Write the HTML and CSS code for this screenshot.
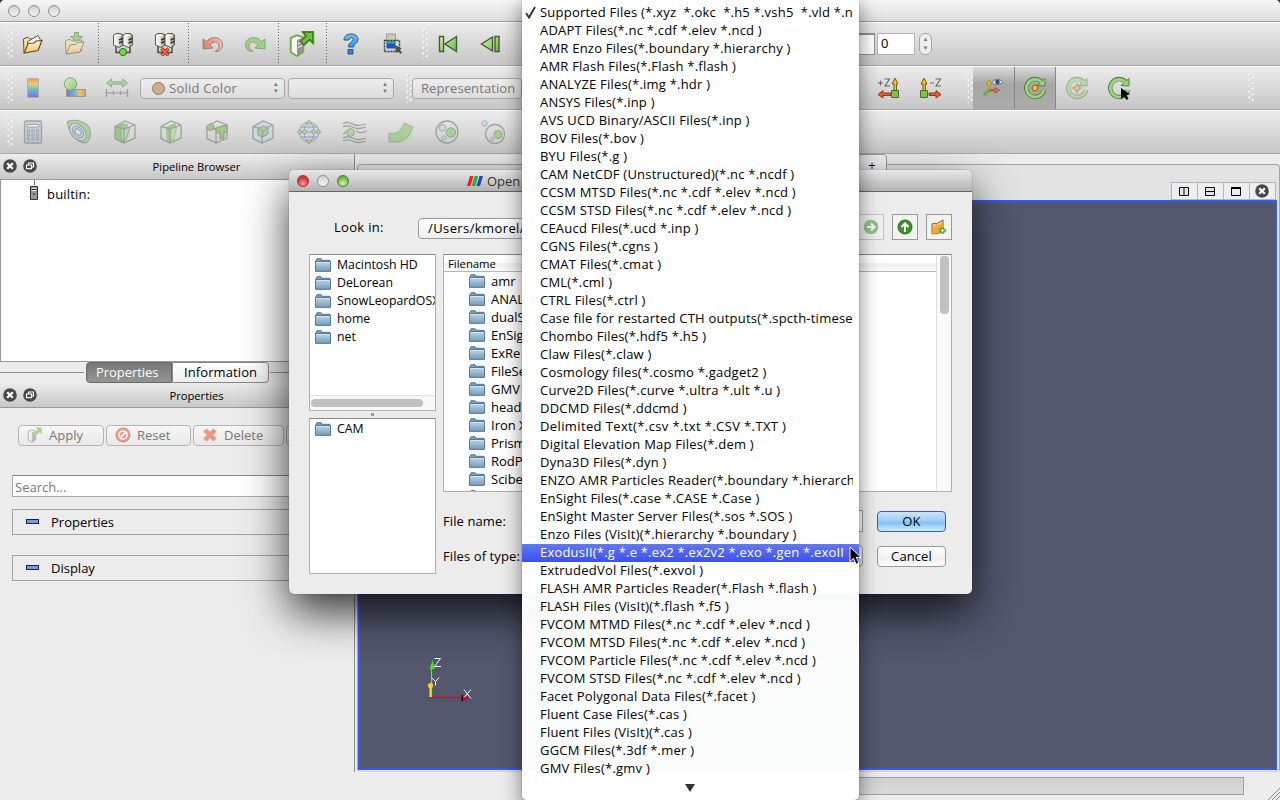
FILE: index.html
```html
<!DOCTYPE html>
<html lang="en">
<head>
<meta charset="utf-8">
<title>ParaView</title>
<link rel="stylesheet" href="styles.css">
</head>
<body>
<svg class="defs" width="0" height="0" aria-hidden="true">
  <defs>
    <linearGradient id="gGreen" x1="0" y1="0" x2="1" y2="1"><stop offset="0" stop-color="#d8f5c0"/><stop offset="1" stop-color="#59c42c"/></linearGradient>
    <linearGradient id="gRed" x1="0" y1="0" x2="1" y2="0"><stop offset="0" stop-color="#f0431c"/><stop offset="1" stop-color="#f6b9a6"/></linearGradient>
    <linearGradient id="gYellow" x1="0" y1="0" x2="0" y2="1"><stop offset="0" stop-color="#fff3cf"/><stop offset="1" stop-color="#f9c75f"/></linearGradient>
    <linearGradient id="gBlue" x1="0" y1="0" x2="0" y2="1"><stop offset="0" stop-color="#6cc0ff"/><stop offset="1" stop-color="#1b7fe6"/></linearGradient>
    <linearGradient id="gSteel" x1="0" y1="0" x2="1" y2="0"><stop offset="0" stop-color="#fff"/><stop offset=".5" stop-color="#e4e4de"/><stop offset="1" stop-color="#8f8f86"/></linearGradient>
    <linearGradient id="gRain" x1="0" y1="0" x2="0" y2="1"><stop offset="0" stop-color="#f4642a"/><stop offset=".3" stop-color="#f6c020"/><stop offset=".6" stop-color="#15a6e0"/><stop offset="1" stop-color="#5a2cb8"/></linearGradient>
    <linearGradient id="gRainH" x1="0" y1="0" x2="1" y2="0"><stop offset="0" stop-color="#5a2cb8"/><stop offset=".4" stop-color="#15a6e0"/><stop offset=".7" stop-color="#f6c020"/><stop offset="1" stop-color="#f4642a"/></linearGradient>
    <linearGradient id="gFolder" x1="0" y1="0" x2="0" y2="1"><stop offset="0" stop-color="#bdd5e6"/><stop offset="1" stop-color="#739dbd"/></linearGradient>
    <symbol id="folder" viewBox="0 0 16 14"><path d="M1 13V2.500L2 .7h4l1 1.600h8V13z" fill="#7f9fb8" stroke="#587590"/><path d="M.5 3.500h15v9.800H.5z" fill="url(#gFolder)" stroke="#587a96"/><path d="M1 4.500h14" stroke="#d6e5f0"/></symbol>
    <symbol id="server" viewBox="0 0 22 24"><path d="M4 14v6.500h14V14" fill="none" stroke="#4b4b3e" stroke-width="1.500"/><g stroke="#5b5b4c"><path d="M1.500 3L4 1.500h4.500L11 3v10l-4 2.500L1.500 13z" fill="url(#gSteel)"/><path d="M11 3l2.500-1.500H18L20.500 3v10l-4 2.500L11 13z" fill="url(#gSteel)"/></g><path d="M7 8l3.500-1.500M7 11l3.500-1.500M16.500 8L20 6.500M16.500 11L20 9.500" fill="none" stroke="#33332a" stroke-width="1.400"/><path d="M3 3.500h6M12.500 3.500h6" stroke="#fff"/></symbol>
    <symbol id="dockclose" viewBox="0 0 14 14"><circle cx="7" cy="7" r="6.800" fill="#484848"/><path d="M4.200 4.200l5.600 5.600M9.800 4.200L4.200 9.800" stroke="#fff" stroke-width="2.300"/></symbol>
    <symbol id="dockfloat" viewBox="0 0 14 14"><circle cx="7" cy="7" r="6.800" fill="#484848"/><path d="M5.500 5.500V4h5v4H9M3.500 6h5v3.700h-5z" fill="none" stroke="#fff" stroke-width="1.200"/></symbol>
    <symbol id="rot" viewBox="0 0 24 24"><path d="M18.500 5.500A9 9 0 1 0 21 14" fill="none" stroke="#5c7a4c" stroke-width="4.400"/><path d="M14 9.500l8 .500V2.500z" fill="#97d673" stroke="#5c7a4c"/><path d="M18.500 6A8.800 8.800 0 1 0 20.800 14" fill="none" stroke="#9ad97a" stroke-width="2.600"/></symbol>
    <symbol id="cube" viewBox="0 0 24 24"><path d="M2 6.500L12 1l10 4v13L11 23 2 18.500zM2 6.500L11 9l11-4M11 9v14" fill="none" stroke="#67675a" stroke-width="1.300"/></symbol>
    <symbol id="arrow" viewBox="0 0 14 20"><path d="M1 1v14.500l3.500-3.200 2.600 6 2.800-1.200-2.600-5.800H12z" fill="#000" stroke="#fff"/></symbol>
  </defs>
</svg>

<main class="window">
  <header class="titlebar"><i class="light"></i><i class="light"></i><i class="light"></i></header>

  <div class="toolbar">
    <i class="grip"></i>
    <span class="tool"><svg width="22" height="22" viewBox="0 0 22 22"><path d="M2 20L1.500 6l4-2 2 2 3 0V18z" fill="#fbe3a4" stroke="#5a5030"/><path d="M5 9l11-6.500L19 8 8 13z" fill="#fff" stroke="#5a5a50"/><path d="M2.200 20L6 10.500l6-.500 2-2 6-.500-4 10z" fill="url(#gYellow)" stroke="#5a5030" stroke-width="1.200"/></svg></span>
    <span class="tool off"><svg width="22" height="24" viewBox="0 0 22 24"><path d="M2 22L1.500 9l4-2 2 2 10-1V19z" fill="#fbe3a4" stroke="#5a5030"/><path d="M2.200 22L6 13l6-.500 2-2 6-.500-4 10z" fill="url(#gYellow)" stroke="#5a5030"/><path d="M10.500.5h4v4h4L12.500 10l-6-5.500h4z" fill="#65c63c" stroke="#3f6a30"/></svg></span>
    <i class="rule"></i>
    <span class="tool"><svg width="22" height="24"><use href="#server"/><circle cx="11" cy="20" r="3.600" fill="#6bdc3c" stroke="#356a20"/></svg></span>
    <span class="tool"><svg width="22" height="24"><use href="#server"/><path d="M7.500 16.500l7 7m0-7l-7 7" stroke="#73301e" stroke-width="3.400"/><path d="M7.500 16.500l7 7m0-7l-7 7" stroke="#f9603c" stroke-width="2"/></svg></span>
    <i class="rule"></i>
    <span class="tool off strong"><svg width="22" height="18" viewBox="0 0 22 18"><path d="M1 4v10l10-1-3-3c3-4 8-4 9 0 .5 3-1 5-4 6.500C18 17 21 13 20.500 9 19.500 2 10 0 4.500 6.500z" fill="url(#gRed)" stroke="#7a4434"/></svg></span>
    <span class="tool off"><svg width="22" height="18" viewBox="0 0 22 18"><path d="M21 4v10l-10-1 3-3c-3-4-8-4-9 0-.5 3 1 5 4 6.500C4 17 1 13 1.500 9 2.500 2 12 0 17.500 6.500z" fill="#65c63c" stroke="#3f6a30"/></svg></span>
    <i class="rule tight"></i>
    <span class="tool"><svg width="26" height="26" viewBox="0 0 26 26"><path d="M2 7l6-2.500 6 2V21l-6 4-6-4zM14 1h10v11l-3.500-3.500L15 14l-3.500-3.500L17 5z" fill="#fff" stroke="#8ede4c" stroke-width="3"/><path d="M2 7l6-2.500 6 2V21l-6 4-6-4z" fill="#f6f6f2" stroke="#6a675a"/><path d="M8 9l6-2.500V21l-6 4z" fill="#98948a"/><path d="M9 13l4-2M9 16.500l4-2" stroke="#fff"/><path d="M14 1h10v11l-3.500-3.500L15 14l-3.500-3.500L17 5z" fill="#6fbf45" stroke="#3d6228" stroke-width="1.300"/></svg></span>
    <i class="rule wide"></i>
    <span class="tool"><svg width="18" height="22" viewBox="0 0 18 22"><path d="M2 7C2 3 5 1 9 1s7 2 7 5.500c0 4-4.500 4.500-4.500 7.500H6.500c0-5 4.500-5 4.500-7.500 0-2.500-4-2.500-4 .5zM6 16.500h5v4.500H6z" fill="url(#gBlue)" stroke="#32566e"/></svg></span>
    <span class="tool"><svg width="20" height="22" viewBox="0 0 20 22"><path d="M3.500 1h9v7h-9z" fill="#d4c6b4" stroke="#a09a90"/><path d="M3.500 8h9v7.500h-9z" fill="#1d50c0"/><path d="M3.500 8h9v2.500h-9z" fill="#21b68c"/><path d="M1.500 7.500h15v11h-15z" fill="none" stroke="#333" stroke-dasharray="2 1" stroke-width="1.400"/><path d="M12 12l1 8 2-2 2.500 3 1.500-1.500-2.500-3 2.500-1z" fill="#55523c"/></svg></span>
    <i class="grip late"></i>
    <span class="tool first-play"><svg width="20" height="18" viewBox="0 0 20 18"><path d="M1.500 1.500h4v15h-4zM18.500 1.500v15L7 9z" fill="url(#gGreen)" stroke="#4c5540" stroke-width="1.400"/></svg></span>
    <span class="tool"><svg width="20" height="18" viewBox="0 0 20 18"><path d="M15 1.500h4v15h-4zM12.500 2v14L1.500 9z" fill="url(#gGreen)" stroke="#4c5540" stroke-width="1.400"/></svg></span>
    <div class="timebox"><span class="field blank"></span><span class="field num">0</span><span class="spinner"><b>▲</b><b>▼</b></span></div>
  </div>

  <div class="toolbar">
    <i class="grip"></i>
    <span class="tool off strong"><svg width="12" height="20"><path d="M.5.500h11v19H.5z" fill="url(#gRain)" stroke="#999"/></svg></span>
    <span class="tool off strong"><svg width="24" height="22" viewBox="0 0 24 22"><path d="M3.500 12.500h19v7h-19z" fill="url(#gRainH)" stroke="#77735a"/><circle cx="7.500" cy="7" r="6.200" fill="url(#gGreen)" stroke="#5a7a4a"/></svg></span>
    <span class="tool off"><svg width="24" height="20" viewBox="0 0 24 20"><path d="M1.500 5L6.500.8v3h11v-3L22.500 5l-5 4.200v-3h-11v3z" fill="#7cd055" stroke="#50803c"/><path d="M1.500 11v8M22.500 11v8M1.500 15h21M8.500 13v4M15.500 13v4" stroke="#666" fill="none" stroke-width="1.200"/></svg></span>
    <span class="combo solid"><i class="swatch"></i>Solid Color<em><b>▲</b><b>▼</b></em></span>
    <span class="combo empty"><em><b>▲</b><b>▼</b></em></span>
    <i class="grip third"></i>
    <span class="combo repr">Representation</span>
    <div class="viewtools">
      <span class="tool"><svg width="24" height="24" viewBox="0 0 24 24"><path d="M1 7h5M3.500 4.500v5M7.500 3h5l-4.500 7h5" fill="none" stroke="#666" stroke-width="1.100"/><path d="M17 15V8h-2l3-6 3 6h-1.500v7z" fill="#f9bd28" stroke="#6b5c2c"/><path d="M14 17H6v-2.500l-5 4L6 22v-2.500h8z" fill="#f4552c" stroke="#8a3a24"/><path d="M14.500 14.500h7v7h-7z" fill="#7cc43f" stroke="#4c6a34"/></svg></span>
      <span class="tool"><svg width="24" height="24" viewBox="0 0 24 24"><path d="M11 7h4M16.500 3h5L17 10h5" fill="none" stroke="#666" stroke-width="1.100"/><path d="M4 15V8H2l3-6 3 6H6.500v7z" fill="#f9bd28" stroke="#6b5c2c"/><path d="M10 17h7v-2.500l5 4-5 3.500v-2.500h-7z" fill="#f4552c" stroke="#8a3a24"/><path d="M1.500 14.500h7v7h-7z" fill="#7cc43f" stroke="#4c6a34"/></svg></span>
      <i class="grip camgrip"></i>
      <span class="tool down"><svg width="24" height="22" viewBox="0 0 24 22"><path d="M6 13V7H4.500L7 3l2.500 4H8v6z" fill="#f9bd28" stroke="#9b8040" stroke-width=".8"/><path d="M8 12.500h5v-2l4.500 2.700-4.500 2.800v-2H8z" fill="#f4653c" stroke="#9a4a34" stroke-width=".7"/><path d="M7.500 13.500L4 16" stroke="#5fae38" stroke-width="2.500"/><path d="M1.500 19v-5l4 4z" fill="#5fae38"/><path d="M10 5.500C13 1.500 17.500 1.500 20.500 5c-3 3.500-7 3.500-10.500.5z" fill="#e6edf2" stroke="#55626e" stroke-width=".8"/><circle cx="15.500" cy="5" r="2.300" fill="#2f4b6c"/></svg></span>
      <span class="tool down two"><svg width="24" height="24"><use href="#rot"/><circle cx="12" cy="12" r="3" fill="#f9b91f" stroke="#8a6a20"/></svg></span>
      <span class="tool off"><svg width="24" height="24"><use href="#rot"/><path d="M12 6.500v11M6.500 12h11" stroke="#555"/><circle cx="12" cy="12" r="2.800" fill="#f9b91f" stroke="#8a6a20"/></svg></span>
      <span class="tool"><svg width="24" height="24"><use href="#rot"/><path d="M14 12v11l3-2.500 2.500 3.500 2-1.500-2.200-3.500 3.700-.7z" fill="#000"/></svg></span>
      <i class="grip endgrip"></i>
    </div>
  </div>

  <div class="toolbar filters">
    <i class="grip"></i>
    <span class="tool off"><svg width="20" height="24" viewBox="0 0 20 24"><rect x="1.500" y="1" width="17" height="22" rx="1.500" fill="#a9c4da" stroke="#5e6a70" stroke-width="1.300"/><path d="M4 4.500h12v2.500H4z" fill="#fff" stroke="#666"/><path d="M4 11h12M4 15h12M4 19h12" stroke="#666" stroke-width="3" stroke-dasharray="3 1.500"/><path d="M5 11h11M5 15h11M5 19h11" stroke="#fff" stroke-width="1.200" stroke-dasharray="1.200 3.300"/></svg></span>
    <span class="tool off"><svg width="26" height="26" viewBox="0 0 26 26"><path d="M1.500 2.500C9-1 24 3 24.500 13c.3 7-3 11-6 11C9 23 2 13 1.500 2.500z" fill="#7cc85a" stroke="#4f6a48"/><g transform="rotate(48 12 13)" fill="none" stroke="#4f6680"><ellipse cx="12" cy="13" rx="10" ry="6.500" fill="#d7e5cf"/><ellipse cx="12" cy="13" rx="7" ry="4.500" fill="#9fc4e6"/><ellipse cx="12" cy="13" rx="3.600" ry="2.300" fill="#dfe9f2"/></g></svg></span>
    <span class="tool off"><svg width="24" height="24"><path d="M2 7l6-4 7 1-3 18-3 1-7-4z" fill="#63b346"/><path d="M8 9l9-1.500-4 12-5 2z" fill="#9fd98a" stroke="#4a7a38"/><use href="#cube"/></svg></span>
    <span class="tool off"><svg width="24" height="24"><path d="M7 7l9-4 2 5-3 12-7 1z" fill="#63b346"/><path d="M11 9l6-1.500-2 11-5 2z" fill="#9fd98a"/><use href="#cube"/></svg></span>
    <span class="tool off"><svg width="24" height="24"><use href="#cube"/><path d="M2 5.500l4-2 3 2v4l-4 1-3-1.500zM11 8l5-2 6-1v7l-3 1v5l-4 1v-6h-4z" fill="#63b346" stroke="#4a6a40"/></svg></span>
    <span class="tool off"><svg width="24" height="24"><path d="M2 6.500L12 1l10 4v13L11 23 2 18.500z" fill="#b9d6ea"/><use href="#cube"/><path d="M7 9l5-3 5 2v6l-5 3-5-2z" fill="#7cc85a" stroke="#4a6a40"/><path d="M7 9l5 2 5-3M12 11v6" fill="none" stroke="#4a6a40"/></svg></span>
    <span class="tool off"><svg width="24" height="24" viewBox="0 0 24 24"><g fill="none" stroke="#5f6b70"><circle cx="12" cy="12" r="9.800" fill="#bcd4e6"/><ellipse cx="12" cy="12" rx="4.800" ry="9.800"/><path d="M2 12h20M4 7h16M4 17h16"/></g><g fill="#a8dd8c" stroke="#4c7038"><circle cx="12" cy="2.500" r="1.800"/><circle cx="12" cy="21.500" r="1.800"/><circle cx="2.500" cy="12" r="1.800"/><circle cx="21.500" cy="12" r="1.800"/><circle cx="7.500" cy="11.500" r="1.800"/><circle cx="16.500" cy="11.500" r="1.800"/></g></svg></span>
    <span class="tool off"><svg width="26" height="24" viewBox="0 0 26 24"><path d="M1 4c5-4 8 0 12 1s8 0 11-1M1 7c5-3 9 0 12 1s8 0 11-1M1 14c2 0 2-2 3-3M14 11c3 2 7 2 11 0M1 18c5-3 9 0 12 1s8 0 11-1M1 21c5-3 9 0 12 1s8 0 11-1" fill="none" stroke="#666b5c" stroke-width="1.300"/><circle cx="8.500" cy="12.500" r="3.800" fill="#8ad169" stroke="#5a6a50"/></svg></span>
    <span class="tool off"><svg width="26" height="22" viewBox="0 0 26 22"><path d="M1 12h24v9H1z" fill="#b9dba9"/><path d="M1 12c8 2 13-3 15-10l9 4C22 14 18 20 10 21H1z" fill="#7cc85a" stroke="#68805c"/></svg></span>
    <span class="tool off"><svg width="24" height="24" viewBox="0 0 24 24"><circle cx="12" cy="12" r="11" fill="none" stroke="#5f6b60" stroke-width="1.300"/><circle cx="7.500" cy="8" r="3.200" fill="#b8d8ee" stroke="#5c7a90"/><circle cx="16" cy="12.500" r="4.700" fill="#79c857" stroke="#4f7a40"/><circle cx="9" cy="18" r="2.200" fill="#b8d8ee" stroke="#5c7a90"/></svg></span>
    <span class="tool off"><svg width="24" height="24" viewBox="0 0 24 24"><circle cx="14" cy="14" r="9.500" fill="none" stroke="#5f6b60" stroke-width="1.300"/><circle cx="3.500" cy="3.500" r="2.800" fill="#b8d8ee" stroke="#5c7a90"/><circle cx="17" cy="14.500" r="4" fill="#79c857" stroke="#4f7a40"/><circle cx="11" cy="19" r="1.800" fill="#b8d8ee" stroke="#5c7a90"/></svg></span>
  </div>

  <div class="body">
    <aside class="dock">
      <div class="dockhead"><svg width="14" height="14"><use href="#dockclose"/></svg><svg width="14" height="14"><use href="#dockfloat"/></svg><span>Pipeline Browser</span></div>
      <div class="tree"><svg width="8" height="22" viewBox="0 0 8 22"><path d="M4.500 0v5" stroke="#777"/><path d="M.5 6.500h7v13h-7z" fill="#999" stroke="#333"/><path d="M2 8h4v3H2z" fill="#fff"/><path d="M2 9.500h4M4 13v2" stroke="#111"/></svg><span>builtin:</span></div>
      <div class="tabs"><span class="tab on">Properties</span><span class="tab">Information</span></div>
      <div class="dockhead second"><svg width="14" height="14"><use href="#dockclose"/></svg><svg width="14" height="14"><use href="#dockfloat"/></svg><span>Properties</span></div>
      <div class="actions">
        <span class="btn ap"><svg width="16" height="16" viewBox="0 0 26 26"><path d="M2 7l6-2.500 6 2V21l-6 4-6-4z" fill="#eee" stroke="#4d4a3c"/><path d="M8 9l6-2.500V21l-6 4z" fill="#98948a"/><path d="M14 1h10v11l-3.500-3.500L15 14l-3.500-3.500L17 5z" fill="#6fbf45"/></svg>Apply</span>
        <span class="btn re"><svg width="16" height="16" viewBox="0 0 16 16"><circle cx="8" cy="8" r="7" fill="#f0512c" stroke="#c23a1c"/><circle cx="8" cy="8" r="4" fill="none" stroke="#fff" stroke-width="1.700"/><path d="M5.200 10.800l5.600-5.600" stroke="#fff" stroke-width="1.700"/></svg>Reset</span>
        <span class="btn de"><svg width="16" height="16" viewBox="0 0 16 16"><path d="M3 3l10 10M13 3L3 13" stroke="#ee4a28" stroke-width="4.500"/></svg>Delete</span>
        <span class="btn he"></span>
      </div>
      <div class="search">Search...</div>
      <div class="group"><i></i>Properties</div>
      <div class="group g2"><i></i>Display</div>
    </aside>
    <section class="pane">
      <div class="layouttabs"><span>+</span></div>
      <div class="frame">
        <div class="viewbar">
          <span><svg width="10" height="9"><path d="M.5.500h9v8h-9zM5 0v9" fill="#dfe2f2" stroke="#000"/></svg></span>
          <span><svg width="10" height="9"><path d="M.5.500h9v8h-9zM0 4.500h10" fill="#dfe2f2" stroke="#000"/></svg></span>
          <span><svg width="10" height="9"><path d="M.5 1h9v7.500h-9z" fill="#eee" stroke="#000"/><path d="M0 1h10" stroke="#000" stroke-width="2"/></svg></span>
          <span><svg width="14" height="14"><use href="#dockclose"/></svg></span>
        </div>
        <div class="render">
          <svg class="axes" width="50" height="50" viewBox="0 0 50 50"><path d="M6.500 42V9" stroke="#58ea20" stroke-width="1.200"/><path d="M4.500 14l3-9 2.500 9z" fill="#4fdf1c"/><path d="M5.500 42V31" stroke="#f6e810" stroke-width="2"/><circle cx="5.500" cy="30.500" r="2.600" fill="#f4d41c"/><path d="M6 42.500h32" stroke="#d8001c"/><path d="M37 40l8 3-8 3z" fill="#d8001c"/><path d="M36.500 40h1.500v6h-1.500z" fill="#200"/><g fill="none" stroke="#fff" stroke-width="1"><path d="M9.500 3.500h6l-6 8h6.500M6.500 22.500l4 4v4M14 22.500l-3.500 4M39 34.500l7 9M46 34.500l-7 8"/></g></svg>
        </div>
      </div>
    </section>
  </div>
  <footer class="status"><span class="progress"></span><svg width="12" height="12"><path d="M0 12L12 0M4 12l8-8M8 12l4-4" stroke="#888"/></svg></footer>
</main>

<section class="dialog">
  <header class="dlgbar"><i class="light red"></i><i class="light"></i><i class="light green"></i><svg width="16" height="12" viewBox="0 0 16 12"><path d="M0 11L3 1h3.500l-3 10z" fill="#ee1f2c"/><path d="M4.700 11l3-10h3.500l-3 10z" fill="#24b52c"/><path d="M9.500 11l3-10H16l-3 10z" fill="#2a3be0"/></svg><span>Open File:</span></header>
  <div class="lookrow">
    <span class="looklabel">Look in:</span><span class="lookcombo">/Users/kmorel/</span>
    <span class="sq faint"><svg width="16" height="16" viewBox="0 0 16 16"><circle cx="8" cy="8" r="7.300" fill="#3c9426"/><path d="M4 8h7M8 4.500L11.500 8 8 11.500" fill="none" stroke="#fff" stroke-width="2"/></svg></span>
    <span class="sq"><svg width="16" height="16" viewBox="0 0 16 16"><circle cx="8" cy="8" r="7" fill="#3c9426" stroke="#246a18"/><path d="M8 13V5M4.500 8L8 4.500 11.500 8" fill="none" stroke="#fff" stroke-width="2"/></svg></span>
    <span class="sq"><svg width="16" height="16" viewBox="0 0 16 16"><path d="M1 15V5l3-1 1 1 7-4v10l-3 3z" fill="#f4c877" stroke="#8a6426"/><path d="M1 15L3 7.500l9-3L11 13z" fill="#f2a92f"/><path d="M11.500 8l3.500 3.500-3.500 3.500L8 11.500z" fill="#4fae34" stroke="#3a7f28" stroke-width=".7"/><path d="M11.500 9.500v4M9.500 11.500h4" stroke="#d8f5c8"/></svg></span>
  </div>
  <div class="panes">
    <div class="leftcol">
      <div class="list places">
        <div class="row"><svg width="16" height="14"><use href="#folder"/></svg><span>Macintosh HD</span></div>
        <div class="row"><svg width="16" height="14"><use href="#folder"/></svg><span>DeLorean</span></div>
        <div class="row"><svg width="16" height="14"><use href="#folder"/></svg><span>SnowLeopardOSX</span></div>
        <div class="row"><svg width="16" height="14"><use href="#folder"/></svg><span>home</span></div>
        <div class="row"><svg width="16" height="14"><use href="#folder"/></svg><span>net</span></div>
        <div class="hscroll"><i></i></div>
      </div>
      <div class="split"></div>
      <div class="list recent"><div class="row"><svg width="16" height="14"><use href="#folder"/></svg><span>CAM</span></div></div>
    </div>
    <div class="rightcol">
      <div class="list files">
        <div class="filecol">
          <div class="colhead">Filename</div>
          <div class="row"><svg width="16" height="14"><use href="#folder"/></svg><span>amr</span></div>
          <div class="row"><svg width="16" height="14"><use href="#folder"/></svg><span>ANAL</span></div>
          <div class="row"><svg width="16" height="14"><use href="#folder"/></svg><span>dualS</span></div>
          <div class="row"><svg width="16" height="14"><use href="#folder"/></svg><span>EnSig</span></div>
          <div class="row"><svg width="16" height="14"><use href="#folder"/></svg><span>ExRe</span></div>
          <div class="row"><svg width="16" height="14"><use href="#folder"/></svg><span>FileSe</span></div>
          <div class="row"><svg width="16" height="14"><use href="#folder"/></svg><span>GMV</span></div>
          <div class="row"><svg width="16" height="14"><use href="#folder"/></svg><span>head</span></div>
          <div class="row"><svg width="16" height="14"><use href="#folder"/></svg><span>Iron X</span></div>
          <div class="row"><svg width="16" height="14"><use href="#folder"/></svg><span>Prism</span></div>
          <div class="row"><svg width="16" height="14"><use href="#folder"/></svg><span>RodP</span></div>
          <div class="row"><svg width="16" height="14"><use href="#folder"/></svg><span>Scibe</span></div>
          <div class="row"><svg width="16" height="14"><use href="#folder"/></svg></div>
        </div>
        <div class="vscroll"><i></i></div>
      </div>
      <div class="formrow"><label>File name:</label><span class="infield"></span><span class="push ok">OK</span></div>
      <div class="formrow"><label>Files of type:</label><span class="infield drop"></span><span class="push">Cancel</span></div>
    </div>
  </div>
</section>

<nav class="menu">
  <svg class="check" width="11" height="13" viewBox="0 0 11 13"><path d="M1 7l3 4.500L10 1" fill="none" stroke="#333" stroke-width="1.900"/></svg>
  <ul>
    <li>Supported Files (*.xyz&nbsp; *.okc&nbsp; *.h5 *.vsh5&nbsp; *.vld *.nc</li>
    <li>ADAPT Files(*.nc *.cdf *.elev *.ncd )</li>
    <li>AMR Enzo Files(*.boundary *.hierarchy )</li>
    <li>AMR Flash Files(*.Flash *.flash )</li>
    <li>ANALYZE Files(*.img *.hdr )</li>
    <li>ANSYS Files(*.inp )</li>
    <li>AVS UCD Binary/ASCII Files(*.inp )</li>
    <li>BOV Files(*.bov )</li>
    <li>BYU Files(*.g )</li>
    <li>CAM NetCDF (Unstructured)(*.nc *.ncdf )</li>
    <li>CCSM MTSD Files(*.nc *.cdf *.elev *.ncd )</li>
    <li>CCSM STSD Files(*.nc *.cdf *.elev *.ncd )</li>
    <li>CEAucd Files(*.ucd *.inp )</li>
    <li>CGNS Files(*.cgns )</li>
    <li>CMAT Files(*.cmat )</li>
    <li>CML(*.cml )</li>
    <li>CTRL Files(*.ctrl )</li>
    <li>Case file for restarted CTH outputs(*.spcth-timese</li>
    <li>Chombo Files(*.hdf5 *.h5 )</li>
    <li>Claw Files(*.claw )</li>
    <li>Cosmology files(*.cosmo *.gadget2 )</li>
    <li>Curve2D Files(*.curve *.ultra *.ult *.u )</li>
    <li>DDCMD Files(*.ddcmd )</li>
    <li class="loose">Delimited Text(*.csv *.txt *.CSV *.TXT )</li>
    <li>Digital Elevation Map Files(*.dem )</li>
    <li>Dyna3D Files(*.dyn )</li>
    <li>ENZO AMR Particles Reader(*.boundary *.hierarchy</li>
    <li>EnSight Files(*.case *.CASE *.Case )</li>
    <li>EnSight Master Server Files(*.sos *.SOS )</li>
    <li>Enzo Files (VisIt)(*.hierarchy *.boundary )</li>
    <li class="sel">ExodusII(*.g *.e *.ex2 *.ex2v2 *.exo *.gen *.exoII</li>
    <li>ExtrudedVol Files(*.exvol )</li>
    <li>FLASH AMR Particles Reader(*.Flash *.flash )</li>
    <li>FLASH Files (VisIt)(*.flash *.f5 )</li>
    <li>FVCOM MTMD Files(*.nc *.cdf *.elev *.ncd )</li>
    <li>FVCOM MTSD Files(*.nc *.cdf *.elev *.ncd )</li>
    <li>FVCOM Particle Files(*.nc *.cdf *.elev *.ncd )</li>
    <li>FVCOM STSD Files(*.nc *.cdf *.elev *.ncd )</li>
    <li>Facet Polygonal Data Files(*.facet )</li>
    <li>Fluent Case Files(*.cas )</li>
    <li>Fluent Files (VisIt)(*.cas )</li>
    <li>GGCM Files(*.3df *.mer )</li>
    <li>GMV Files(*.gmv )</li>
  </ul>
  <div class="more"><svg width="10" height="8"><path d="M0 0h10L5 8z" fill="#333"/></svg></div>
</nav>
<svg class="pointer" width="14" height="20"><use href="#arrow"/></svg>
</body>
</html>
```
FILE: styles.css
```css
* { box-sizing: border-box; }
html, body { margin: 0; width: 1280px; height: 800px; overflow: hidden; }
body { position: relative; background: #2c3c70; font: 13px/18px "Open Sans", "Noto Sans", sans-serif; color: #000; }
svg { display: block; flex: none; }
i, em, b { font-style: normal; font-weight: normal; display: block; }
.defs { position: absolute; }

.window { width: 1280px; height: 800px; display: flex; flex-direction: column; background: #ececec; border-radius: 5px 5px 0 0; overflow: hidden; isolation: isolate; }
.titlebar { height: 22px; flex: none; display: flex; align-items: center; gap: 8px; padding-left: 8px; background: linear-gradient(#f6f6f6, #dedede); border-bottom: 1px solid #9c9c9c; }
.light { width: 12px; height: 12px; border-radius: 50%; border: 1px solid #8e8e8e; background: linear-gradient(#d2d2d2, #f4f4f4); }
.light.red { background: radial-gradient(circle at 50% 75%, #ff9d95, #dc3238 60%, #b0353a); border-color: #8b3a3a; }
.light.green { background: radial-gradient(circle at 50% 75%, #d5f5a5, #78bd4c 60%, #4f8a38); border-color: #4b7a38; }

.toolbar { height: 44px; flex: none; display: flex; align-items: center; padding-left: 7px; background: linear-gradient(#ececec, #c6c6c6); border-top: 1px solid #fbfbfb; border-bottom: 1px solid #a9a9a9; }
.grip { width: 6px; height: 30px; flex: none; background: radial-gradient(circle at 1.500px 1.500px, #f4f4f4 1px, transparent 1.400px) 0 0 / 6px 5.800px, radial-gradient(circle at 4.500px 4px, #f2f2f2 1px, transparent 1.400px) 0 0 / 6px 5.800px, radial-gradient(circle at 2.200px 2.200px, #bbb 1px, transparent 1.400px) 0 0 / 6px 5.800px; margin-right: -1px; }
.tool { width: 42px; height: 42px; flex: none; display: flex; align-items: center; justify-content: center; }
.off svg { opacity: .5; }
.strong svg { opacity: .6; }
.rule { flex: none; width: 6px; height: 42px; background: repeating-linear-gradient(#666 0 1px, transparent 1px 3px) 2px 0 / 1px 100% no-repeat; }
.rule.tight { width: 5px; }
.rule.wide { width: 7px; background-position: 3px 0; }
.grip.late { margin-left: 8px; }
.timebox { margin-left: 338px; display: flex; align-items: center; width: 83px; }
.field { height: 22px; background: #fff; border: 1px solid #aaa; border-width: 2px 1px 1px; }
.field.blank { width: 26px; border-color: #8f8f8f; margin-right: 2px; }
.field.num { width: 38px; padding-left: 3px; line-height: 19px; border: 1px solid #b5b5b5; }
.spinner { margin-left: 4px; width: 13px; height: 22px; border: 1px solid #a5a5a5; border-radius: 6px; background: #eee; color: #777; font-size: 6px; line-height: 9px; text-align: center; padding-top: 1px; }

.combo { height: 21px; flex: none; display: flex; align-items: center; border: 1px solid #a8a8a8; border-radius: 4px; background: linear-gradient(#eee, #dcdcdc); color: #777; }
.combo.solid { width: 145px; margin-left: 2px; padding-left: 11px; letter-spacing: .25px; }
.swatch { width: 13px; height: 13px; margin-right: 4px; border-radius: 50%; background: #d4ac88; border: 1px solid #8a7c70; }
.combo em { margin-left: auto; padding-right: 5px; font-size: 6px; line-height: 7px; color: #777; }
.combo.empty { width: 106px; margin-left: 3px; }
.grip.third { margin-left: 12px; }
.combo.repr { width: 110px; margin-left: 1px; padding-left: 8px; overflow: hidden; letter-spacing: .1px; }
.viewtools { display: flex; align-items: center; margin-left: 346px; }
.camgrip { margin-left: 15px; margin-right: 0; }
.down { background: linear-gradient(#dcdcdc, #a6a6a6 40%, #ababab); border-right: 1px solid #858585; }
.down.two { width: 41px; }
.endgrip { margin-left: 108px; }
.filters { padding-left: 7px; }
.filters .tool { width: 46px; }
.filters .grip { margin-right: -3px; }

.body { height: 618px; flex: none; display: flex; gap: 2px; }
.dock { width: 355px; border-right: 1px solid #8d8d8d; display: flex; flex-direction: column; }
.dockhead { height: 26px; flex: none; display: flex; align-items: center; gap: 6px; padding: 0 0 2px 3px; border-bottom: 1px solid #999; background: linear-gradient(#ececec, #c8c8c8); font-size: 11.200px; }
.dockhead span { flex: 1; text-align: center; margin-right: 4px; padding-top: 2px; }
.dockhead.second { height: 25px; margin-top: -1px; padding-bottom: 0; }
.dockhead.second span { margin-right: 4px; }
.tree { height: 182px; flex: none; display: flex; gap: 9px; padding-left: 29px; background: #fff; border: 1px solid #999; border-width: 0 0 1px 1px; }
.tree span { padding-top: 5px; letter-spacing: .2px; }
.tabs { height: 22px; flex: none; display: flex; padding-left: 86px; background: linear-gradient(#8f8f8f, #8f8f8f) 0 10px / 84px 1px no-repeat, linear-gradient(#8f8f8f, #8f8f8f) 270px 10px / 84px 1px no-repeat; }
.tab { height: 21px; border: 1px solid #888; border-radius: 0 4px 4px 0; padding: 0 9px 0 11px; width: 97px; line-height: 19px; background: linear-gradient(#fff, #eee); letter-spacing: .1px; }
.tab.on { width: 86px; padding: 0 8px 0 9px; color: #fff; font-weight: 500; letter-spacing: -.05px; background: linear-gradient(#777, #959595); border-radius: 4px 0 0 4px; border-color: #666; }
.actions { display: flex; gap: 2px; margin: 17px 0 0 18px; overflow: hidden; }
.btn { height: 21px; flex: none; display: flex; align-items: center; border: 1px solid #b4b4b4; border-radius: 4px; padding: 0 0 1px 8px; gap: 6px; color: #777; background: linear-gradient(#f6f6f6, #e9e9e9); }
.btn svg { opacity: .55; }
.ap { width: 86px; } .re { width: 85px; } .de { width: 91px; } .he { width: 60px; }
.search { margin: 29px 0 0 12px; height: 22px; flex: none; background: #fff; border: 1px solid #aaa; border-top: 1px solid #888; padding-left: 2px; line-height: 22px; color: #777; }
.group { margin: 12px 0 0 12px; height: 26px; flex: none; display: flex; align-items: center; padding-left: 13px; border: 1px solid #a2a2a2; }
.group.g2 { margin-top: 20px; }
.group i { width: 13px; height: 5px; background: #7a98dc; border: 1px solid #13205e; margin-right: 12px; position: relative; top: -1px; }

.pane { flex: 1; display: flex; flex-direction: column; position: relative; }
.layouttabs { height: 10px; display: flex; justify-content: flex-end; padding-right: 393px; position: relative; z-index: 1; }
.layouttabs span { width: 30px; height: 20px; border: 1px solid #999; border-radius: 4px; text-align: center; line-height: 20px; background: #f2f2f2; }
.frame { flex: 1; border: 1px solid #a5a5a5; border-radius: 4px; border-bottom-color: #d2d2d2; background: #e3e3e3; display: flex; flex-direction: column; padding: 17px 2px 1px 0; }
.viewbar { display: flex; justify-content: flex-end; height: 18px; padding-right: 1px; }
.viewbar span { width: 27px; margin-left: -1px; height: 18px; padding-right: 2px; border: 1px solid #b5b5b5; background: #efefef; display: flex; align-items: center; justify-content: center; }
.render { flex: 1; border: 2px solid #3656ff; background: #52576e; position: relative; }
.axes { position: absolute; left: 65px; top: 453px; }
.status { flex: 1; display: flex; align-items: center; justify-content: flex-end; }
.progress { width: 400px; height: 18px; border: 1px solid #a0a0a0; background: linear-gradient(#d0d0d0, #dadada); margin-right: 24px; }
.status svg { align-self: flex-end; }

.dialog { position: absolute; left: 289px; top: 170px; width: 683px; height: 424px; background: #ececec; border-radius: 5px; box-shadow: 0 0 1px rgba(0,0,0,.7), 0 18px 44px rgba(0,0,0,.78); overflow: hidden; display: flex; flex-direction: column; }
.dlgbar { height: 22px; flex: none; display: flex; align-items: center; gap: 8px; padding-left: 8px; background: linear-gradient(#e8e8e8, #b2b2b2); border-bottom: 1px solid #666; color: #333; }
.dlgbar svg { margin-left: 110px; }
.dlgbar span { margin-left: -4px; }
.lookrow { display: flex; align-items: center; height: 26px; margin: 22px 0 14px; padding-left: 45px; }
.looklabel { width: 84px; letter-spacing: .3px; }
.lookcombo { width: 440px; height: 21px; margin-top: 2px; border: 1px solid #999; border-radius: 4px; background: linear-gradient(#fff, #eee); padding-left: 9px; line-height: 19px; letter-spacing: .4px; }
.sq { width: 26px; height: 26px; border: 1px solid #999; display: flex; align-items: center; justify-content: center; background: #f3f3f3; margin-right: 8px; }
.sq.faint { opacity: .5; }
.panes { display: flex; gap: 7px; padding-left: 20px; }
.leftcol { width: 127px; font-size: 12.300px; }
.list { background: #fff; border: 1px solid #b0b0b0; border-top-color: #888; overflow: hidden; }
.row { height: 18px; display: flex; align-items: center; gap: 6px; padding-left: 5px; white-space: nowrap; }
.places { height: 157px; padding-top: 1px; position: relative; }
.hscroll { position: absolute; left: 0; right: 0; bottom: 0; height: 15px; border-top: 1px solid #e2e2e2; background: #f8f8f8; padding: 3px 0 0 1px; }
.hscroll i { width: 112px; height: 8px; border-radius: 4px; background: #c1c1c1; }
.split { height: 7px; background: radial-gradient(circle, #999 1.500px, transparent 2px); }
.recent { height: 156px; padding-top: 1px; }
.rightcol { width: 509px; }
.files { height: 238px; display: flex; }
.filecol { flex: 1; }
.filecol .row { padding-left: 25px; }
.colhead { height: 17px; padding-left: 4px; font-size: 11.300px; line-height: 18px; background: linear-gradient(#fff 50%, #efefef 50%, #fafafa); border-bottom: 1px solid #b5b5b5; }
.vscroll { width: 15px; border-left: 1px solid #ddd; background: #fafafa; padding: 1px 0 0 3px; }
.vscroll i { width: 9px; height: 58px; border-radius: 4px; background: #c1c1c1; }
.formrow { display: flex; align-items: center; height: 22px; margin-top: 18px; letter-spacing: .1px; }
.formrow + .formrow { margin-top: 13px; }
.formrow label { width: 90px; }
.infield { width: 330px; height: 22px; border: 1px solid #a0a0a0; background: #fff; margin-right: 14px; }
.infield.drop { border-radius: 4px; background: linear-gradient(#fff, #ddd); }
.push { width: 69px; height: 21px; border: 1px solid #999; border-radius: 4px; text-align: center; line-height: 19px; background: linear-gradient(#fff, #f0f0f0 60%, #fff); }
.push.ok { border-color: #5154a0; background: linear-gradient(#cfe4fa, #9bcbf7 50%, #7fbcf5 52%, #c4f0ff); }

.menu { position: absolute; left: 521.500px; top: -4px; width: 337.500px; height: 804px; background: rgba(255,255,255,.98); border-radius: 5px; box-shadow: 0 0 1px rgba(0,0,0,.6), 0 8px 20px rgba(0,0,0,.5); }
.menu ul { list-style: none; margin: 0; padding: 8px 0 0; }
.menu li { height: 18px; line-height: 16px; letter-spacing: .22px; padding-left: 18.500px; border-right: 6px solid transparent; overflow: hidden; white-space: nowrap; }
.menu .loose { letter-spacing: .38px; }
.menu .sel { color: #fff; font-weight: 500; letter-spacing: .2px; background: linear-gradient(#6378f0, #3b50ee) border-box; }
.check { position: absolute; left: 3px; top: 10px; }
.more { display: flex; justify-content: center; padding-top: 6px; }
.pointer { position: absolute; left: 849px; top: 546px; }
```
